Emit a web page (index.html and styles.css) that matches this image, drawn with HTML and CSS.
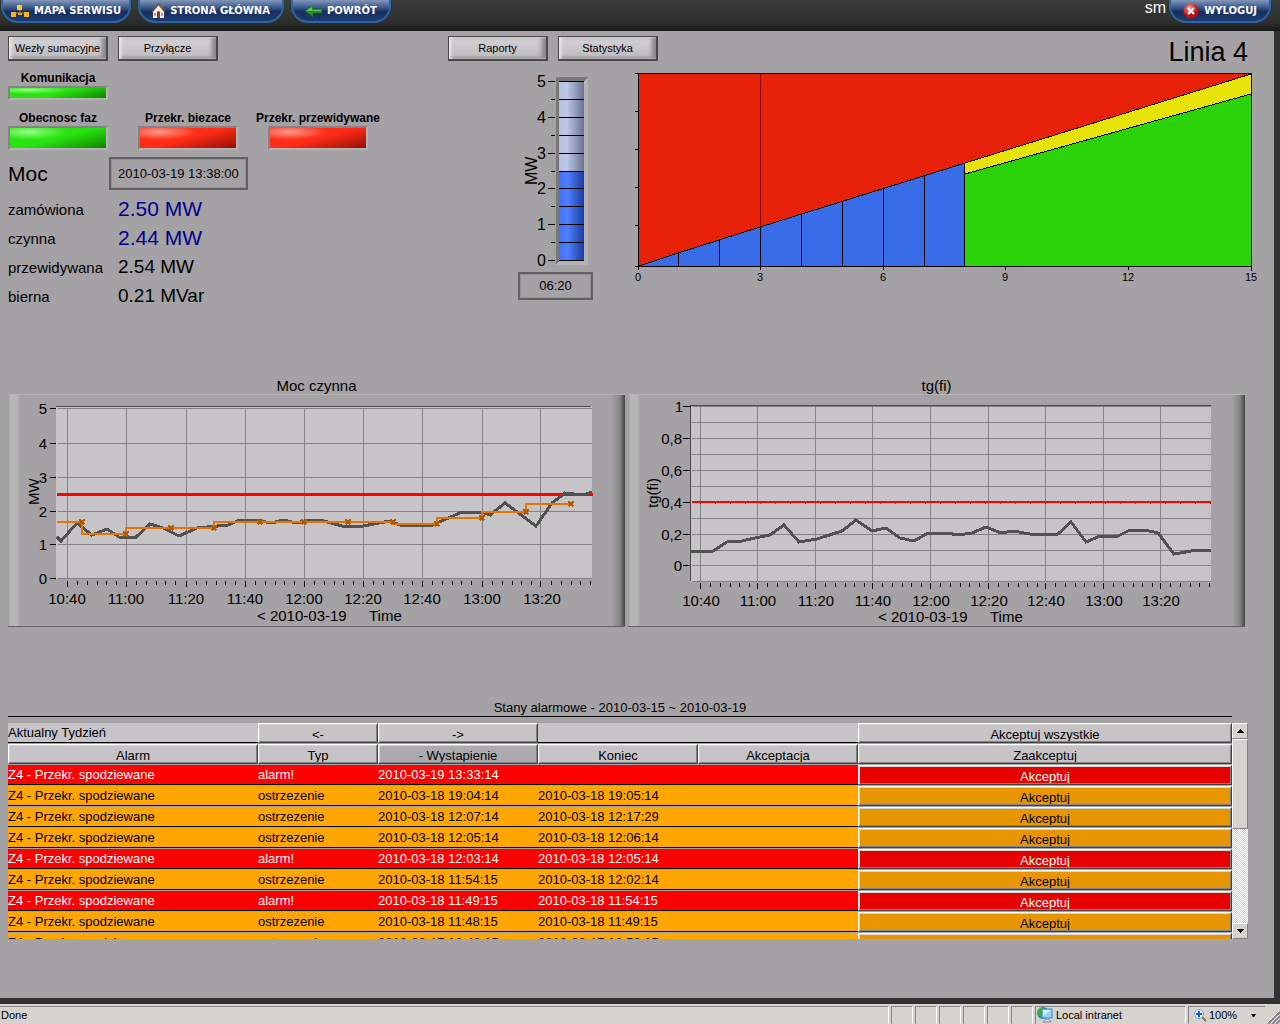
FILE: index.html
```html
<!DOCTYPE html>
<html lang="pl">
<head>
<meta charset="utf-8">
<title>Linia 4</title>
<link rel="stylesheet" href="styles.css">
</head>
<body>
<header class="topbar">
  <nav class="topnav">
    <a class="pill snug" href="#mapa">
      <svg width="18" height="12" viewBox="0 0 18 12"><path d="M3 9V8h12M9 4v4" stroke="#c98a1a" fill="none"/><rect x="0" y="7" width="5" height="5" fill="#f5b21e"/><rect x="13" y="7" width="5" height="5" fill="#f5b21e"/><rect x="6" y="0" width="5" height="5" fill="#ffc83a"/><rect x="7" y="8" width="4" height="2" fill="#e8a020"/></svg>
      MAPA SERWISU</a>
    <a class="pill" href="#start">
      <svg width="13" height="16" viewBox="0 0 13 16"><path d="M9 2h2v5h-2z" fill="#777"/><path d="M1 8 6.500 1 12 8v7H1z" fill="#f2efe9"/><path d="M0 9 6.500 1 13 9" stroke="#7b4a35" stroke-width="1.500" fill="none"/><path d="M5 15V9q1.500-2 3 0v6z" fill="#8d3a18"/><path d="M2 10h2v3H2zM9 10h2v3H9z" fill="#b9a28e"/></svg>
      STRONA GŁÓWNA</a>
    <a class="pill" href="#powrot">
      <svg width="17" height="12" viewBox="0 0 17 12"><path d="M0 6 8 0v4h9v4H8v4z" fill="#1f8f22"/><path d="M1 6 7 2v3h9v1z" fill="#5cc84c"/></svg>
      POWRÓT</a>
  </nav>
  <div class="session">
    <span class="user">sm</span>
    <a class="pill" href="#wyloguj">
      <svg width="16" height="16" viewBox="0 0 16 16"><defs><radialGradient id="ball" cx=".4" cy=".3"><stop offset="0" stop-color="#f4a0a0"/><stop offset="1" stop-color="#c20d12"/></radialGradient></defs><circle cx="8" cy="8" r="7.500" fill="url(#ball)"/><path d="m5 5 6 6M11 5l-6 6" stroke="#fff" stroke-width="2"/></svg>
      WYLOGUJ</a>
  </div>
</header>

<main class="page">
  <div class="toolbar">
    <div class="tools"><button class="tool">Wezły sumacyjne</button><button class="tool">Przyłącze</button></div>
    <div class="tools"><button class="tool">Raporty</button><button class="tool">Statystyka</button></div>
    <h1 class="title">Linia 4</h1>
  </div>

  <section class="overview">
    <div class="status">
      <div class="lamps">
        <div class="lamp-cell"><span class="lamp-name">Komunikacja</span><span class="lamp green slim"></span></div>
      </div>
      <div class="lamps">
        <div class="lamp-cell"><span class="lamp-name">Obecnosc faz</span><span class="lamp green"></span></div>
        <div class="lamp-cell"><span class="lamp-name">Przekr. biezace</span><span class="lamp red"></span></div>
        <div class="lamp-cell"><span class="lamp-name">Przekr. przewidywane</span><span class="lamp red"></span></div>
      </div>
      <div class="moc"><h2>Moc</h2><time class="readout">2010-03-19 13:38:00</time></div>
      <dl class="values">
        <dt>zamówiona</dt><dd class="blue">2.50 MW</dd>
        <dt>czynna</dt><dd class="blue">2.44 MW</dd>
        <dt>przewidywana</dt><dd>2.54 MW</dd>
        <dt>bierna</dt><dd>0.21 MVar</dd>
      </dl>
    </div>

    <div class="gauge">
      <svg class="crisp" width="80" height="202" viewBox="518 66 80 202">
        <defs>
          <linearGradient id="empty"><stop offset="0" stop-color="#b4bfe0"/><stop offset=".3" stop-color="#bcc8e6"/><stop offset="1" stop-color="#69758f"/></linearGradient>
          <linearGradient id="full"><stop offset="0" stop-color="#3f70ff"/><stop offset=".35" stop-color="#5080ff"/><stop offset="1" stop-color="#1a3a9c"/></linearGradient>
        </defs>
        <path d="M556 265V77h32l-4 4h-25v180z" fill="#777977"/>
        <path d="M588 77v188h-32l3-4h25V81z" fill="#b4b2b4"/>
        <rect x="559" y="81" width="25" height="90" fill="url(#empty)"/>
        <rect x="559" y="171" width="25" height="90" fill="url(#full)"/>
        <path stroke="#000" d="M559 81.500h25M559 99.500h25M559 117.500h25M559 135.500h25M559 153.500h25M559 171.500h25M559 188.500h25M559 206.500h25M559 224.500h25M559 242.500h25M559 260.500h25"/>
        <path stroke="#000" d="M548 81.500h7M548 117.500h7M548 153.500h7M548 188.500h7M548 224.500h7M548 260.500h7M551 99.500h4M551 135.500h4M551 171.500h4M551 206.500h4M551 242.500h4"/>
        <g class="scale-text" text-anchor="end"><text x="546" y="87">5</text><text x="546" y="123">4</text><text x="546" y="159">3</text><text x="546" y="194">2</text><text x="546" y="230">1</text><text x="546" y="266">0</text></g>
        <text class="scale-text" transform="translate(537 185) rotate(-90)">MW</text>
      </svg>
      <span class="readout clock">06:20</span>
    </div>

    <svg class="crisp ramp" viewBox="628 66 636 222">
      <path d="M639 74h612L965 163 760 227 639 266z" fill="#e72208"/>
      <path d="M639 266 678 253 760 227 965 163v103z" fill="#396de7"/>
      <path d="M965 163 1251 74v20L965 174z" fill="#e7e308"/>
      <path d="M965 174 1251 94v172H965z" fill="#29d308"/>
      <path stroke="#8c0000" d="M760.500 74v153"/>
      <path stroke="#000" fill="none" d="M639 266 678 253 760 227 965 163 1251 74M965 174 1251 94M678.500 253v13M719.500 240v26M760.500 227v43M801.500 214v52M842.500 201v65M883.500 188v82M924.500 175v91M964.500 163v103"/>
      <path stroke="#000" fill="none" d="M635 73.500h616.500v197M638.500 73v197M635 266.500h616M635 111.500h3M635 149.500h3M635 187.500h3M635 225.500h3M1005.500 266v4M1128.500 266v4"/>
      <g class="ramp-text" text-anchor="middle"><text x="638" y="281">0</text><text x="760" y="281">3</text><text x="883" y="281">6</text><text x="1005" y="281">9</text><text x="1128" y="281">12</text><text x="1251" y="281">15</text></g>
    </svg>
  </section>

  <section class="charts">
    <figure class="chart">
      <figcaption>Moc czynna</figcaption>
      <div class="frame">
      <svg class="crisp" viewBox="8 394 617 233">
        <defs>
          <path id="minor" d="M10.500 0v4M20.500 0v4M30.500 0v4M39.500 0v4M49.500 0v4" stroke="#000"/>
          <path id="mark" d="M-2.500-2.500l5 5M2.500-2.500l-5 5" stroke="#b35900" stroke-width="2"/>
        </defs>
        <rect x="56" y="406" width="536" height="173" fill="#c6c4c6"/>
        <path stroke="#4a4a4a" d="M56 406.500h535"/>
        <path stroke="#848284" d="M58 408.500h534M58 443.500h534M58 477.500h534M58 511.500h534M58 544.500h534M58 578.500h534M67.500 408v170M126.500 408v170M186.500 408v170M245.500 408v170M304.500 408v170M363.500 408v170M422.500 408v170M482.500 408v170M540.500 408v170"/>
        <path stroke="#000" d="M50 408.500h6M50 443.500h6M50 477.500h6M50 511.500h6M50 544.500h6M50 578.500h6M67.500 581v6M126.500 581v6M186.500 581v6M245.500 581v6M304.500 581v6M363.500 581v6M422.500 581v6M482.500 581v6M540.500 581v6"/>
        <use href="#minor" x="67" y="581"/><use href="#minor" x="126" y="581"/><use href="#minor" x="186" y="581"/><use href="#minor" x="245" y="581"/><use href="#minor" x="304" y="581"/><use href="#minor" x="363" y="581"/><use href="#minor" x="422" y="581"/><use href="#minor" x="482" y="581"/><use href="#minor" x="541" y="581"/>
        <path class="limit" d="M57 494.500h536" stroke-width="3"/>
        <polyline class="series" points="57,537 61,541 77,523 92,535 107,529 119,537 136,537 150,524 163,528 179,536 197,528 228,525 240,520 255,520 272,523 283,520 297,523 308,520 320,520 342,526 358,527 390,521 400,525 430,526 462,512 482,512 490,515 505,503 536,526 552,503 565,493 583,495 592,492"/>
        <path stroke="#e77300" stroke-width="2" fill="none" d="M57 522h25v12h44v-6h88v-6h179v2h44v-6h45v-6h44v-8h45"/>
        <use href="#mark" x="82" y="522"/><use href="#mark" x="126" y="534"/><use href="#mark" x="171" y="528"/><use href="#mark" x="214" y="528"/><use href="#mark" x="260" y="522"/><use href="#mark" x="304" y="522"/><use href="#mark" x="348" y="522"/><use href="#mark" x="393" y="522"/><use href="#mark" x="437" y="524"/><use href="#mark" x="482" y="518"/><use href="#mark" x="526" y="512"/><use href="#mark" x="571" y="504"/>
        <g class="axis-text" text-anchor="end"><text x="47" y="414">5</text><text x="47" y="449">4</text><text x="47" y="483">3</text><text x="47" y="517">2</text><text x="47" y="550">1</text><text x="47" y="584">0</text></g>
        <g class="axis-text" text-anchor="middle"><text x="67" y="604">10:40</text><text x="126" y="604">11:00</text><text x="186" y="604">11:20</text><text x="245" y="604">11:40</text><text x="304" y="604">12:00</text><text x="363" y="604">12:20</text><text x="422" y="604">12:40</text><text x="482" y="604">13:00</text><text x="542" y="604">13:20</text></g>
        <text class="axis-text" x="257" y="621">&lt; 2010-03-19</text><text class="axis-text" x="369" y="621">Time</text>
        <text class="axis-text" transform="translate(39 505) rotate(-90)">MW</text>
      </svg>
      </div>
    </figure>
    <figure class="chart">
      <figcaption>tg(fi)</figcaption>
      <div class="frame">
      <svg class="crisp" viewBox="628 394 617 233">
        <rect x="691" y="405" width="520" height="177" fill="#c6c4c6"/>
        <path stroke="#4a4a4a" fill="none" d="M690.500 581V405.500h520"/>
        <path stroke="#848284" d="M692 406.500h519M692 422.500h519M692 438.500h519M692 454.500h519M692 470.500h519M692 486.500h519M692 518.500h519M692 534.500h519M692 550.500h519M692 565.500h519M692 581.500h519M700.500 406v175M757.500 406v175M815.500 406v175M872.500 406v175M930.500 406v175M988.500 406v175M1045.500 406v175M1103.500 406v175M1160.500 406v175"/>
        <path stroke="#000" d="M683 406.500h8M683 438.500h7M683 470.500h7M683 502.500h7M683 534.500h7M683 565.500h7M700.500 583v6M757.500 583v6M815.500 583v6M872.500 583v6M930.500 583v6M988.500 583v6M1045.500 583v6M1103.500 583v6M1160.500 583v6"/>
        <use href="#minor" x="700" y="583"/><use href="#minor" x="757" y="583"/><use href="#minor" x="815" y="583"/><use href="#minor" x="872" y="583"/><use href="#minor" x="930" y="583"/><use href="#minor" x="988" y="583"/><use href="#minor" x="1045" y="583"/><use href="#minor" x="1103" y="583"/><use href="#minor" x="1160" y="583"/>
        <path class="limit" d="M692 502h519" stroke-width="2"/>
        <path class="limit" d="M700 503.500h512" stroke-dasharray="1 14"/>
        <polyline class="series" points="691,551 713,551 727,542 742,541 755,538 770,535 784,525 799,542 817,539 842,531 856,520 872,531 886,528 900,538 914,541 928,533 947,533 958,535 972,533 986,527 1001,533 1013,531 1030,534 1043,535 1058,534 1071,522 1086,542 1100,536 1118,536 1130,530 1145,530 1158,533 1174,554 1197,550 1211,551"/>
        <g class="axis-text" text-anchor="end"><text x="683" y="412">1</text><text x="682" y="444">0,8</text><text x="682" y="476">0,6</text><text x="682" y="508">0,4</text><text x="682" y="540">0,2</text><text x="682" y="571">0</text></g>
        <g class="axis-text" text-anchor="middle"><text x="701" y="606">10:40</text><text x="758" y="606">11:00</text><text x="816" y="606">11:20</text><text x="873" y="606">11:40</text><text x="931" y="606">12:00</text><text x="989" y="606">12:20</text><text x="1046" y="606">12:40</text><text x="1104" y="606">13:00</text><text x="1161" y="606">13:20</text></g>
        <text class="axis-text" x="878" y="622">&lt; 2010-03-19</text><text class="axis-text" x="990" y="622">Time</text>
        <text class="axis-text" transform="translate(658 508) rotate(-90)">tg(fi)</text>
      </svg>
      </div>
    </figure>
  </section>

  <section class="alarms">
    <h2 class="alarms-title">Stany alarmowe - 2010-03-15 ~ 2010-03-19</h2>
    <div class="list">
      <div class="viewport">
        <table>
          <colgroup><col class="c-alarm"><col class="c-typ"><col class="c-date"><col class="c-date"><col class="c-date"><col></colgroup>
          <thead>
            <tr><td>Aktualny Tydzień</td><td class="raised"><button>&lt;-</button></td><td class="raised"><button>-&gt;</button></td><td colspan="2"></td><td class="raised"><button>Akceptuj wszystkie</button></td></tr>
            <tr><th class="raised"><button>Alarm</button></th><th class="raised"><button>Typ</button></th><th class="raised sorted"><button>- Wystapienie</button></th><th class="raised"><button>Koniec</button></th><th class="raised"><button>Akceptacja</button></th><th class="raised"><button>Zaakceptuj</button></th></tr>
          </thead>
          <tbody>
            <tr class="alarm"><td>Z4 - Przekr. spodziewane</td><td>alarm!</td><td>2010-03-19 13:33:14</td><td></td><td></td><td class="raised"><button>Akceptuj</button></td></tr>
            <tr class="warn"><td>Z4 - Przekr. spodziewane</td><td>ostrzezenie</td><td>2010-03-18 19:04:14</td><td>2010-03-18 19:05:14</td><td></td><td class="raised"><button>Akceptuj</button></td></tr>
            <tr class="warn"><td>Z4 - Przekr. spodziewane</td><td>ostrzezenie</td><td>2010-03-18 12:07:14</td><td>2010-03-18 12:17:29</td><td></td><td class="raised"><button>Akceptuj</button></td></tr>
            <tr class="warn"><td>Z4 - Przekr. spodziewane</td><td>ostrzezenie</td><td>2010-03-18 12:05:14</td><td>2010-03-18 12:06:14</td><td></td><td class="raised"><button>Akceptuj</button></td></tr>
            <tr class="alarm"><td>Z4 - Przekr. spodziewane</td><td>alarm!</td><td>2010-03-18 12:03:14</td><td>2010-03-18 12:05:14</td><td></td><td class="raised"><button>Akceptuj</button></td></tr>
            <tr class="warn"><td>Z4 - Przekr. spodziewane</td><td>ostrzezenie</td><td>2010-03-18 11:54:15</td><td>2010-03-18 12:02:14</td><td></td><td class="raised"><button>Akceptuj</button></td></tr>
            <tr class="alarm"><td>Z4 - Przekr. spodziewane</td><td>alarm!</td><td>2010-03-18 11:49:15</td><td>2010-03-18 11:54:15</td><td></td><td class="raised"><button>Akceptuj</button></td></tr>
            <tr class="warn"><td>Z4 - Przekr. spodziewane</td><td>ostrzezenie</td><td>2010-03-18 11:48:15</td><td>2010-03-18 11:49:15</td><td></td><td class="raised"><button>Akceptuj</button></td></tr>
            <tr class="warn"><td>Z4 - Przekr. spodziewane</td><td>ostrzezenie</td><td>2010-03-17 10:49:15</td><td>2010-03-17 10:50:15</td><td></td><td class="raised"><button>Akceptuj</button></td></tr>
          </tbody>
        </table>
      </div>
      <div class="scrollbar">
        <button class="arrow" aria-label="W górę"><svg width="7" height="4" viewBox="0 0 7 4"><path d="M3 0h1v1h1v1h1v1h1v1H0V3h1V2h1V1h1z"/></svg></button>
        <span class="thumb"></span>
        <button class="arrow" aria-label="W dół"><svg width="7" height="4" viewBox="0 0 7 4"><path d="M0 0h7v1H6v1H5v1H4v1H3V3H2V2H1V1H0z"/></svg></button>
      </div>
    </div>
  </section>
</main>

<footer class="statusbar">
  <span class="pane message">Done</span>
  <span class="pane"></span><span class="pane"></span><span class="pane"></span><span class="pane"></span><span class="pane"></span><span class="pane"></span>
  <span class="pane zone">
    <svg width="16" height="16" viewBox="0 0 16 16"><circle cx="6" cy="6" r="6" fill="#2f7fd0"/><path d="M1 3q4-4 7-2L5 5 4 10Q0 8 1 3z" fill="#3fae3a"/><rect x="5" y="2" width="10" height="9" fill="#8fd4f8" stroke="#3a86c8"/><path d="M6 3h8L6 9z" fill="#d6f1ff"/><path d="M6 15q4-6 8 0z" fill="#dcdff2" stroke="#7f86a8"/></svg>
    Local intranet</span>
  <button class="pane zoom">
    <svg width="13" height="13" viewBox="0 0 13 13"><path d="m8 8 4 4" stroke="#a8622c" stroke-width="2"/><circle cx="5" cy="5" r="4.500" fill="#e4f2ff" stroke="#7ba7dd"/><path d="M5 2v6M2 5h6" stroke="#1c62c4" stroke-width="2"/></svg>
    100%
    <svg class="caret" width="5" height="3" viewBox="0 0 5 3"><path d="M0 0h5L3 3H2z"/></svg>
  </button>
  <svg class="grip" width="13" height="13" viewBox="0 0 13 13"><path d="M1 13 13 1M5 13l8-8M9 13l4-4" stroke="#848284" stroke-width="2"/><path d="M0 12 12 0M4 12l8-8M8 12l4-4" stroke="#fff"/></svg>
</footer>
</body>
</html>
```
FILE: styles.css
```css
* { box-sizing: border-box; }

body {
  margin: 0;
  min-height: 100vh;
  display: flex;
  flex-direction: column;
  background: #313031;
  color: #000;
  font: 13px/16px "Liberation Sans", Arial, sans-serif;
}

h1, h2, dl, dd, figure { margin: 0; font-weight: normal; }
button { font: inherit; color: inherit; }

/* top navigation */
.topbar {
  height: 31px;
  display: flex;
  justify-content: space-between;
  align-items: flex-start;
  padding: 0 9px 0 1px;
  background: linear-gradient(#3b3d3b, #2c2d2a 75%, #181a18);
}
.topnav { display: flex; gap: 7px; }
.session { display: flex; gap: 3px; }
.user { color: #fff; font-size: 16px; }
.pill {
  height: 23px;
  display: flex;
  align-items: center;
  gap: 5px;
  padding: 0 12px;
  border: 2px solid #2c669e;
  border-top: 0;
  border-radius: 0 0 17px 17px;
  background: linear-gradient(#8297b8, #3c5a8c 35%, #182f5e 55%, #1c3b70);
  color: #fff;
  font: bold 10px/16px "DejaVu Sans", Verdana, sans-serif;
  text-decoration: none;
  white-space: nowrap;
}
.snug { padding: 0 8px; }

/* page */
.page {
  flex: 1;
  margin: 0 6px 6px 0;
  padding: 5px 10px 0 8px;
  background: #a5a2a5;
}
.toolbar {
  display: grid;
  grid-template-columns: 440px 1fr auto;
  height: 30px;
  padding-right: 16px;
}
.tools { display: flex; gap: 10px; }
.tool {
  width: 100px;
  height: 25px;
  padding: 0;
  border: 1px solid #4a484a;
  border-width: 1px 2px 2px 1px;
  box-shadow: inset 2px 0 3px #eee, inset -4px 0 4px #848284, inset 0 -2px 2px #949294, inset 0 2px 1px #dedede;
  background: linear-gradient(#d6d3d6, #bdbabd);
  font-size: 11px;
  white-space: nowrap;
}
.title { font-size: 27px; line-height: 32px; }

.overview {
  display: grid;
  grid-template-columns: 440px 180px 1fr;
  align-items: start;
}
.lamps { display: flex; gap: 30px; }
.lamps:first-child { padding: 4px 0 10px; }
.lamp-cell {
  width: 100px;
  display: flex;
  flex-direction: column;
  align-items: center;
}
.lamp-name { font-size: 12px; font-weight: bold; white-space: nowrap; }
.lamp {
  width: 100px;
  height: 24px;
  border: 2px solid;
  border-color: #848284 #b5b2b5 #b5b2b5 #848284;
}
.slim { height: 14px; }
.green { background: radial-gradient(ellipse at 20% 20%, #94ff84, transparent 35%), linear-gradient(165deg, #29e310 50%, #108200); }
.red { background: radial-gradient(ellipse at 20% 20%, #ff9c8c, transparent 35%), linear-gradient(165deg, #ff2c18 50%, #941000); }

.moc { display: flex; align-items: center; margin-top: 7px; }
.moc h2 { width: 101px; font-size: 21px; }
.readout {
  padding: 7px;
  border: 2px solid #636163;
  outline: 1px solid #949294;
  outline-offset: -3px;
  line-height: 15px;
  text-align: center;
}
.values {
  display: grid;
  grid-template-columns: 110px 1fr;
  grid-auto-rows: 29px;
  align-items: center;
  padding-top: 4px;
  font-size: 15px;
}
.values dt { padding-top: 2px; }
.values dd { font-size: 19px; line-height: 24px; }
.values .blue { color: #00008c; font-size: 21px; }

.gauge {
  display: flex;
  flex-direction: column;
  align-items: flex-start;
  padding-left: 70px;
}
.clock { width: 75px; margin-top: 4px; padding: 5px; line-height: 14px; }
.crisp { display: block; shape-rendering: crispEdges; }
.scale-text { font-size: 16px; }
.ramp { width: 100%; height: auto; }
.ramp-text { font-size: 11px; }

/* trend charts */
.charts {
  display: grid;
  grid-template-columns: 1fr 1fr;
  gap: 3px;
  margin-top: 68px;
  padding-right: 19px;
}
.chart figcaption { font-size: 15px; text-align: center; }
.frame {
  border-top: 1px solid #b5b2b5;
  border-bottom: 1px solid #636163;
  background:
    linear-gradient(to right, #9c9a9c, #b5b6b5 20%, #b5b6b5 80%, transparent) left / 12px 100% no-repeat,
    linear-gradient(to right, transparent, #848684 60%, #424542) right / 13px 100% no-repeat;
}
.frame svg { width: 100%; height: auto; margin: -1px 0; }
.axis-text { font-size: 15px; }
.limit { stroke: #f00; }
.series { fill: none; stroke: #525152; stroke-width: 3; }

/* alarm list */
.alarms { margin-top: 73px; padding-right: 18px; }
.alarms-title {
  margin-right: 14px;
  border-bottom: 1px solid #000;
  font-size: 13px;
  text-align: center;
}
.list { display: flex; margin: 6px -2px 0 0; }
.viewport { flex: 1; height: 216px; overflow: hidden; }
table {
  width: 100%;
  margin-top: -1px;
  table-layout: fixed;
  border-spacing: 0 1px;
}
.c-alarm { width: 250px; }
.c-typ { width: 120px; }
.c-date { width: 160px; }
td, th {
  height: 20px;
  padding: 0;
  border-bottom: 1px solid #000;
  font-weight: normal;
  white-space: nowrap;
}
thead { background: #c6c4c6; }
.alarm { background: #f00; color: #fff; }
.warn { background: #ffa600; }
.raised { border: 1px solid; border-color: #fff #424142 #424142 #fff; }
.raised button {
  display: block;
  width: 100%;
  height: 18px;
  padding: 3px 0 0;
  border: 1px solid;
  border-color: #d6d3ce #848284 #848284 #d6d3ce;
  background: none;
  line-height: 13px;
  overflow: hidden;
}
.alarm button { background: #e70000; }
.warn button { background: #e79600; }
thead .sorted { background: #adaaad; }

.scrollbar {
  width: 16px;
  display: flex;
  flex-direction: column;
  background: repeating-conic-gradient(#fff 0 25%, #d6d3ce 0 50%) 0 0 / 2px 2px;
}
.arrow, .thumb {
  border: 1px solid;
  border-color: #fff #848284 #848284 #fff;
  background: #d6d3ce;
}
.arrow {
  height: 16px;
  display: flex;
  align-items: center;
  justify-content: center;
  padding: 0;
}
.thumb { height: 90px; margin-bottom: auto; }

/* browser status bar */
.statusbar {
  height: 20px;
  display: flex;
  gap: 2px;
  padding-top: 2px;
  background: #d6d3ce;
  font-size: 11px;
}
.pane {
  width: 22px;
  display: flex;
  align-items: center;
  border: 1px solid;
  border-color: #848284 #fff #d6d3ce #848284;
}
.message { flex: 1; border-left: 0; padding-left: 1px; }
.zone { width: 151px; gap: 3px; padding-left: 1px; }
.zoom { width: 77px; gap: 2px; padding: 0 0 0 5px; border-right: 0; background: none; }
.caret { margin-left: 12px; }
.grip { align-self: flex-end; }
```
